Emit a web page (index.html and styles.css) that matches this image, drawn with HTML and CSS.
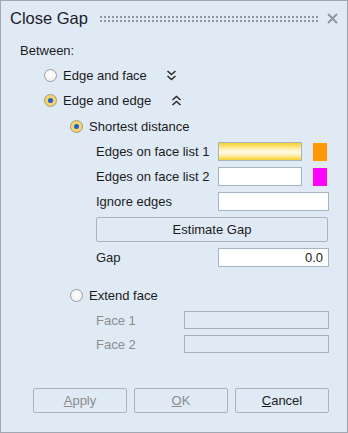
FILE: index.html
```html
<!DOCTYPE html>
<html lang="en">
<head>
  <meta charset="UTF-8">
  <title>Close Gap</title>
  <link rel="stylesheet" href="styles.css">
</head>
<body>

  <div class="dialog">
    <!-- Title bar -->
    <div class="titlebar">
      <span class="title">Close Gap</span>
      <span class="grip"></span>
      <svg class="close" width="11" height="11" viewBox="0 0 11 11">
        <path d="M1 1 L10 10 M10 1 L1 10" stroke="#8e98a4" stroke-width="2" fill="none"/>
      </svg>
    </div>

    <div class="content">
      <div class="row heading">Between:</div>

      <div class="row level1">
        <span class="radio"></span>
        <span>Edge and face</span>
        <svg class="chevron down" width="11" height="11" viewBox="0 0 11 11">
          <path d="M1.5 1 L5.5 4.5 L9.5 1 M1.5 6 L5.5 9.5 L9.5 6" stroke="#2b2b2b" stroke-width="1.6" fill="none"/>
        </svg>
      </div>

      <div class="row level1">
        <span class="radio checked"></span>
        <span>Edge and edge</span>
        <svg class="chevron up" width="11" height="11" viewBox="0 0 11 11">
          <path d="M1.5 5 L5.5 1.5 L9.5 5 M1.5 10 L5.5 6.5 L9.5 10" stroke="#2b2b2b" stroke-width="1.6" fill="none"/>
        </svg>
      </div>

      <div class="row level2 tall">
        <span class="radio checked"></span>
        <span>Shortest distance</span>
      </div>

      <div class="row field">
        <label>Edges on face list 1</label>
        <span class="input short active"></span>
        <span class="swatch orange"></span>
      </div>

      <div class="row field">
        <label>Edges on face list 2</label>
        <span class="input short"></span>
        <span class="swatch magenta"></span>
      </div>

      <div class="row field">
        <label>Ignore edges</label>
        <span class="input wide"></span>
      </div>

      <div class="row action">
        <button class="btn estimate">Estimate Gap</button>
      </div>

      <div class="row field gap-row">
        <label>Gap</label>
        <span class="input wide value">0.0</span>
      </div>

      <div class="row level2 extend">
        <span class="radio"></span>
        <span>Extend face</span>
      </div>

      <div class="row face">
        <label>Face 1</label>
        <span class="input disabled"></span>
      </div>

      <div class="row face">
        <label>Face 2</label>
        <span class="input disabled"></span>
      </div>
    </div>

    <!-- Dialog buttons -->
    <div class="footer">
      <button class="btn off"><u>A</u>pply</button>
      <button class="btn off"><u>O</u>K</button>
      <button class="btn"><u>C</u>ancel</button>
    </div>
  </div>

</body>
</html>
```

FILE: styles.css
```css
body {
  margin: 0;
  font-family: 'Liberation Sans', Arial, sans-serif;
  font-size: 13px;
  color: #1b1b1b;
}

.dialog {
  width: 348px;
  height: 433px;
  box-sizing: border-box;
  border: 1px solid #a0a8b4;
  background-color: #e0eaf5;
  display: flex;
  flex-direction: column;
}

.titlebar {
  height: 35px;
  display: flex;
  align-items: center;
  padding: 0 9px 0 9px;
}

.title {
  font-size: 16.5px;
  color: #1c1c2a;
}

.grip {
  flex: 1;
  height: 8px;
  margin: 0 9px 0 11px;
  background-image: radial-gradient(circle, #8e98a5 0.9px, transparent 1.2px);
  background-size: 4px 4px;
}

.close {
  display: block;
}

.content {
  padding: 2px 19px 0 0;
}

.row {
  height: 25px;
  display: flex;
  align-items: center;
}

.heading {
  padding-left: 19px;
}

.level1 {
  padding-left: 43px;
}

.level2 {
  padding-left: 69px;
}

.tall {
  height: 26px;
}

.radio {
  width: 11px;
  height: 11px;
  border: 1px solid #9c9c9c;
  border-radius: 50%;
  background: radial-gradient(circle at 50% 40%, #ffffff, #ececec);
  margin-right: 6px;
  position: relative;
  flex: none;
}

.radio.checked {
  background: #f6d46c;
  border-color: #a39a80;
}

.radio.checked::after {
  content: "";
  position: absolute;
  left: 3px;
  top: 3px;
  width: 5px;
  height: 5px;
  border-radius: 50%;
  background-color: #1f5fcf;
}

.chevron {
  display: block;
}

.chevron.down {
  margin-left: 19px;
}

.chevron.up {
  margin-left: 20px;
}

.field {
  padding-left: 95px;
}

.field label {
  width: 122px;
  flex: none;
}

.input {
  height: 17px;
  box-sizing: content-box;
  border: 1px solid #a9b4c2;
  background-color: #fff;
  flex: none;
}

.input.short {
  width: 82px;
}

.input.wide {
  width: 109px;
}

.input.active {
  background: linear-gradient(#f6cf2c, #fde88a 25%, #fff6d4 45%, #fff8dc 60%, #fde88a 80%, #f6cf2c);
}

.input.value {
  text-align: right;
  line-height: 17px;
  width: 104px;
  padding-right: 5px;
}

.swatch {
  width: 14px;
  height: 18px;
  margin-left: 11px;
}

.orange {
  background-color: #ff9900;
}

.magenta {
  background-color: #ff00ff;
}

.action {
  padding-left: 95px;
  margin-top: 3px;
}

.btn {
  font-family: 'Liberation Sans', Arial, sans-serif;
  font-size: 13px;
  color: #1b1b1b;
  background-color: #e0eaf5;
  border: 1px solid #a9b2be;
  border-radius: 2px;
  height: 25px;
  padding: 0;
}

.estimate {
  width: 233px;
}

.gap-row {
  margin-top: 3px;
}

.extend {
  margin-top: 13px;
}

.face {
  height: 24px;
  padding-left: 95px;
}

.face label {
  width: 88px;
  flex: none;
  color: #8c8c8c;
}

.input.disabled {
  width: 143px;
  height: 16px;
  background-color: #e0eaf5;
  border-color: #a9b0ba;
}

.footer {
  margin-top: auto;
  padding: 0 18px 19px 0;
  display: flex;
  justify-content: flex-end;
  gap: 7px;
}

.footer .btn {
  width: 94px;
}

.btn.off {
  color: #8c8c8c;
}
```
